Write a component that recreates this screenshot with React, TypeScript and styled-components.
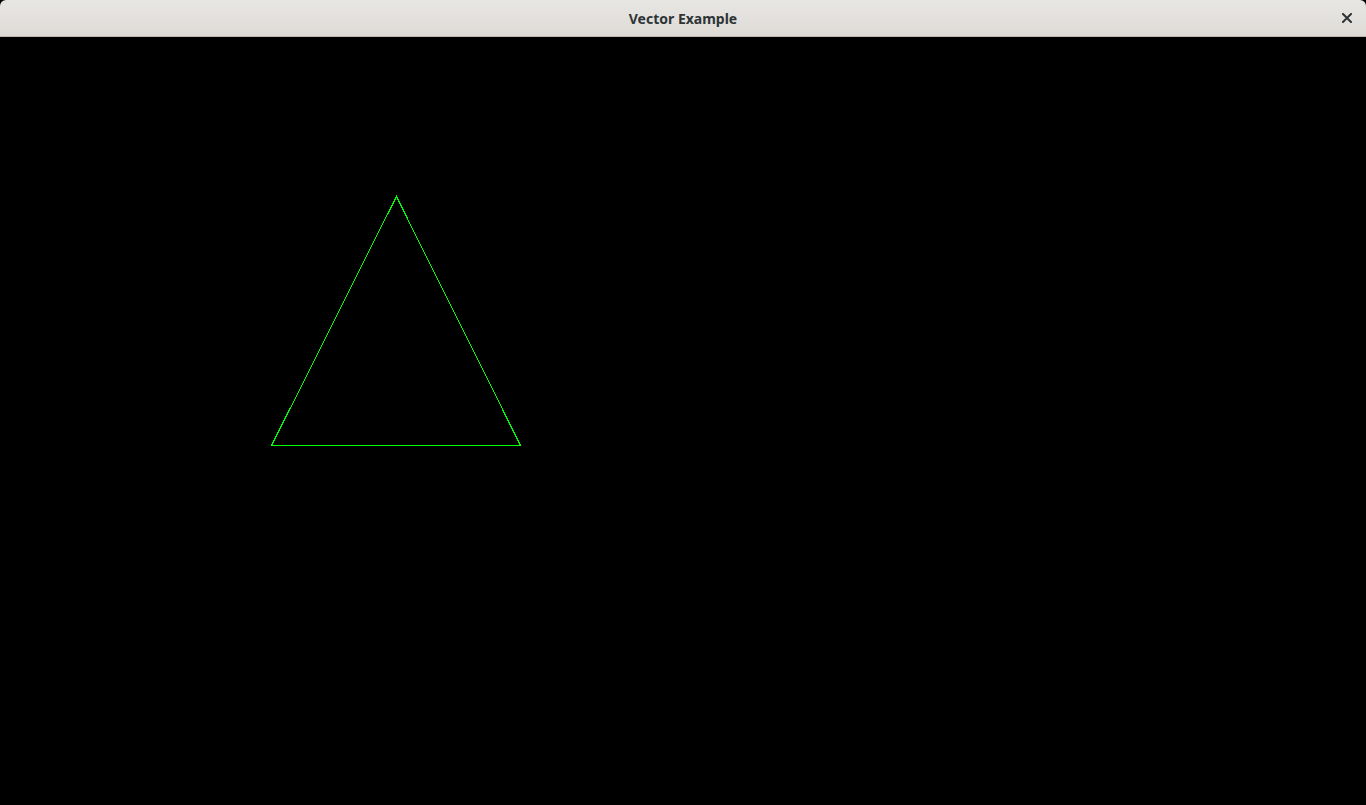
import React from 'react';
import styled, { createGlobalStyle } from 'styled-components';

const GlobalStyle = createGlobalStyle`
  html, body {
    margin: 0;
    padding: 0;
    height: 100%;
    background: #000;
  }
  #root {
    height: 100%;
  }
`;

const App: React.FC = () => {
  return (
    <>
      <GlobalStyle />
      <Window>
        <TitleBar>
          <Title>Vector Example</Title>
          <CloseButton aria-label="Close">
            <svg width="10" height="10" viewBox="0 0 10 10">
              <path d="M1 1 L9 9 M9 1 L1 9" stroke="#2e3436" strokeWidth="2" strokeLinecap="square" />
            </svg>
          </CloseButton>
        </TitleBar>
        <Canvas>
          <svg width="100%" height="100%" shapeRendering="crispEdges">
            <polygon
              points="396.5,159.5 271.5,408.5 520.5,408.5"
              fill="none"
              stroke="#00ff00"
              strokeWidth="1"
            />
          </svg>
        </Canvas>
      </Window>
    </>
  );
};

const Window = styled.div`
  display: flex;
  flex-direction: column;
  width: 1366px;
  height: 805px;
  background: #000;
`;

const TitleBar = styled.div`
  position: relative;
  display: flex;
  align-items: center;
  justify-content: center;
  height: 36px;
  flex-shrink: 0;
  background: linear-gradient(#e8e6e3, #dedbd7);
  border-bottom: 1px solid #bdb6af;
  border-radius: 6px 6px 0 0;
`;

const Title = styled.span`
  font-family: "Noto Sans", "Open Sans", sans-serif;
  font-weight: 700;
  font-size: 14px;
  color: #2e3436;
`;

const CloseButton = styled.div`
  position: absolute;
  right: 14px;
  top: 13px;
  width: 10px;
  height: 10px;
  display: flex;
`;

const Canvas = styled.div`
  flex: 1;
  background: #000;
`;

export default App;
